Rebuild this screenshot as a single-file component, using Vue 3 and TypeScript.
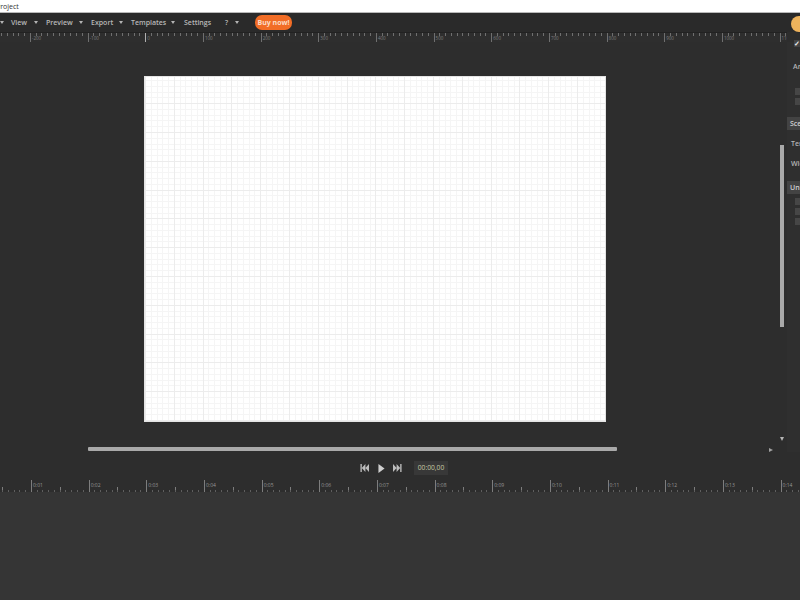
<script setup lang="ts">
interface MenuItem { label: string; caret: boolean; width: number }
const menu: MenuItem[] = [
  { label: '', caret: true, width: 11 },
  { label: 'View', caret: true, width: 35 },
  { label: 'Preview', caret: true, width: 45 },
  { label: 'Export', caret: true, width: 40 },
  { label: 'Templates', caret: true, width: 53 },
  { label: 'Settings', caret: false, width: 41 },
  { label: '?', caret: true, width: 26 },
]
const topMarks: number[] = Array.from({ length: 14 }, (_, i) => (i - 2) * 100)
const timeMarks: string[] = Array.from({ length: 14 }, (_, i) => `0:${String(i + 1).padStart(2, '0')}`)
const sideRows = ['Template', 'Width']
</script>

<template>
  <div class="app">
    <div class="titlebar"><span class="title">Project</span></div>

    <div class="menubar">
      <div v-for="m in menu" :key="m.label" class="menu-item" :style="{ width: m.width + 'px' }">
        <span v-if="m.label" class="menu-label">{{ m.label }}</span>
        <span v-if="m.caret" class="caret"></span>
      </div>
      <button class="buy">Buy now!</button>
      <span class="avatar"></span>
    </div>

    <div class="top-ruler">
      <div v-for="n in topMarks" :key="n" class="top-cell" :class="{ origin: n === 0 }">
        <span class="mark">{{ n }}</span>
      </div>
    </div>

    <div class="workspace">
      <div class="stage">
        <div class="canvas-row">
          <div class="canvas"></div>
        </div>
        <div class="v-scroll">
          <div class="v-thumb"></div>
          <span class="arrow-down"></span>
        </div>
        <div class="h-scroll">
          <div class="h-thumb"></div>
          <span class="arrow-right"></span>
        </div>
      </div>
      <aside class="side">
        <div class="check-row"><span class="check">✓</span></div>
        <div class="side-text first">Animation</div>
        <div class="box-list top-boxes">
          <span class="box"></span>
          <span class="box"></span>
        </div>
        <div class="side-head">Scene</div>
        <div class="side-rows">
          <div v-for="r in sideRows" :key="r" class="side-text row">{{ r }}</div>
        </div>
        <div class="side-head units">Units</div>
        <div class="box-list unit-boxes">
          <span class="box"></span>
          <span class="box"></span>
          <span class="box"></span>
        </div>
      </aside>
    </div>

    <div class="transport">
      <svg class="tbtn prev" viewBox="0 0 10 8" width="9" height="8" preserveAspectRatio="none" aria-label="Start">
        <path d="M0.5 0H2V8H0.5ZM6 0V8L2 4ZM10 0V8L6 4Z" fill="#bdbdbd" />
      </svg>
      <svg class="tbtn play" viewBox="0 0 8 9" width="7" height="9" preserveAspectRatio="none" aria-label="Play">
        <path d="M0.5 0L7.5 4.5L0.5 9Z" fill="#cfcfcf" />
      </svg>
      <svg class="tbtn next" viewBox="0 0 10 8" width="9" height="8" preserveAspectRatio="none" aria-label="End">
        <path d="M0 0L4 4L0 8ZM4 0L8 4L4 8ZM8 0H9.5V8H8Z" fill="#bdbdbd" />
      </svg>
      <div class="time">00:00,00</div>
    </div>

    <div class="time-ruler">
      <div v-for="t in timeMarks" :key="t" class="time-cell">
        <span class="time-mark">{{ t }}</span>
      </div>
    </div>

    <div class="tracks"></div>
  </div>
</template>

<style>
html, body { margin: 0; background: #2d2d2d; }
</style>

<style scoped>
.app {
  width: 800px;
  height: 600px;
  overflow: hidden;
  display: flex;
  flex-direction: column;
  font-family: "Open Sans", "Liberation Sans", sans-serif;
  background: #2d2d2d;
  color: #bdbdbd;
}
.titlebar {
  height: 13px;
  flex: none;
  background: #fff;
  border-bottom: 1px solid #b9b9b9;
  box-sizing: border-box;
  overflow: hidden;
}
.title {
  display: block;
  margin-left: -4px;
  font-size: 7px;
  line-height: 13px;
  color: #333;
}
.menubar {
  height: 19px;
  flex: none;
  display: flex;
  align-items: center;
  background: #2a2a2a;
  position: relative;
  font-size: 7px;
  font-weight: 600;
  color: #b8b8b8;
}
.menu-item {
  flex: none;
  display: flex;
  align-items: center;
  justify-content: space-between;
  padding-right: 8.5px;
  box-sizing: border-box;
  height: 100%;
}
.menu-item:first-child { justify-content: flex-start; padding-right: 0; }
.menu-item:nth-child(5) { padding-right: 9.5px; }
.menu-item:nth-child(7) { padding-right: 12.5px; }
.menu-label { white-space: nowrap; }
.caret {
  width: 0;
  height: 0;
  border-left: 2.5px solid transparent;
  border-right: 2.5px solid transparent;
  border-top: 3px solid #b4b4b4;
}
.buy {
  margin-left: 4px;
  width: 37px;
  height: 15px;
  border: 0;
  border-radius: 7px;
  padding: 0;
  background: #f26d26;
  color: #fbdcc6;
  font: 700 7px "Open Sans", "Liberation Sans", sans-serif;
}
.avatar {
  position: absolute;
  left: 791px;
  top: 3px;
  width: 16px;
  height: 16px;
  border-radius: 50%;
  background: #eeb35c;
}
.top-ruler {
  height: 10px;
  flex: none;
  width: 787px;
  box-sizing: border-box;
  display: flex;
  padding-left: 30px;
  overflow: hidden;
  border-top: 1px solid #222;
  background:
    repeating-linear-gradient(90deg, #6f6f6f 0 1px, transparent 1px 5.767px) 1px 0 / 100% 3px no-repeat,
    #2e2e2e;
}
.top-cell {
  flex: none;
  width: 57.67px;
  height: 9px;
  box-sizing: border-box;
  border-left: 1px solid #6f6f6f;
  font-size: 4.5px;
  color: #7f7f7f;
  padding: 2px 0 0 1px;
}
.top-cell.origin { border-left-color: #b0b0b0; height: 10px; }
.mark { display: block; line-height: 6px; }
.workspace {
  height: 416px;
  flex: none;
  display: flex;
}
.stage {
  width: 787px;
  flex: none;
  position: relative;
}
.canvas-row {
  padding: 34px 0 0 144px;
}
.canvas {
  width: 462px;
  height: 346px;
  box-sizing: border-box;
  border: 1px solid #e4e4e4;
  background-color: #fff;
  background-image:
    repeating-linear-gradient(90deg, #ececec 0 1px, transparent 1px 28.8px),
    repeating-linear-gradient(0deg, #ececec 0 1px, transparent 1px 28.8px),
    repeating-linear-gradient(90deg, #f5f5f5 0 1px, transparent 1px 5.76px),
    repeating-linear-gradient(0deg, #f5f5f5 0 1px, transparent 1px 5.76px);
}
.v-scroll {
  position: absolute;
  left: 780px;
  top: 0;
  width: 5px;
  height: 400px;
}
.v-thumb {
  position: absolute;
  top: 103px;
  left: 0;
  width: 4px;
  height: 182px;
  background: #a9a9a9;
}
.arrow-down {
  position: absolute;
  top: 395px;
  left: 0;
  width: 0;
  height: 0;
  border-left: 2px solid transparent;
  border-right: 2px solid transparent;
  border-top: 4px solid #b5b5b5;
}
.h-scroll {
  position: absolute;
  left: 88px;
  top: 405px;
  width: 690px;
  height: 5px;
}
.h-thumb {
  width: 529px;
  height: 4px;
  background: #a9a9a9;
  border-radius: 1px;
}
.arrow-right {
  position: absolute;
  left: 681px;
  top: 1px;
  width: 0;
  height: 0;
  border-top: 2px solid transparent;
  border-bottom: 2px solid transparent;
  border-left: 4px solid #a0a0a0;
}
.side {
  flex: none;
  width: 60px;
  height: 410px;
  background: #2f2f2f;
  font-size: 7px;
  font-weight: 600;
  color: #b4b4b4;
  white-space: nowrap;
}
.check-row { height: 8px; padding-left: 7px; display: flow-root; }
.check {
  display: block;
  width: 7px;
  height: 7px;
  margin-top: -2px;
  background: #444;
  color: #eee;
  font-size: 7px;
  line-height: 7px;
}
.side-text { padding-left: 4px; line-height: 12px; }
.side-text.first { margin-top: 11px; padding-left: 6px; }
.box-list {
  display: flex;
  flex-direction: column;
  padding-left: 8px;
  gap: 3px;
}
.top-boxes { margin-top: 15px; }
.box {
  display: block;
  width: 30px;
  height: 7px;
  background: #464646;
}
.side-head {
  margin-top: 12px;
  height: 13px;
  line-height: 13px;
  padding-left: 3px;
  background: #434343;
  color: #cfcfcf;
}
.side-rows {
  display: flex;
  flex-direction: column;
  gap: 8px;
  padding-top: 8px;
}
.side-head.units { margin-top: 11px; }
.unit-boxes { margin-top: 4px; }
.transport {
  height: 20px;
  flex: none;
  display: flex;
  align-items: center;
  padding-left: 360px;
  box-sizing: border-box;
}
.tbtn { flex: none; }
.prev { margin-right: 9px; }
.play { margin-right: 8px; }
.next { margin-right: 12px; }
.time {
  width: 34px;
  height: 14px;
  background: #383838;
  color: #c7c9a4;
  font-size: 6.7px;
  line-height: 14px;
  text-align: center;
}
.time-ruler {
  height: 12px;
  flex: none;
  display: flex;
  padding-left: 31px;
  overflow: hidden;
  box-sizing: border-box;
  margin-top: 2px;
  background:
    repeating-linear-gradient(90deg, #5f5f5f 0 1px, transparent 1px 5.767px) 2px bottom / 100% 2px no-repeat,
    repeating-linear-gradient(90deg, #7d7d7d 0 1px, transparent 1px 57.67px) 2px bottom / 100% 5px no-repeat,
    #2d2d2d;
}
.time-cell {
  flex: none;
  width: 57.67px;
  height: 12px;
  box-sizing: border-box;
  border-left: 1px solid #7d7d7d;
  padding: 2px 0 0 1px;
  font-size: 5px;
  color: #959595;
}
.time-mark { display: block; line-height: 7px; }
.tracks {
  flex: 1;
  background: #353535;
}
</style>
